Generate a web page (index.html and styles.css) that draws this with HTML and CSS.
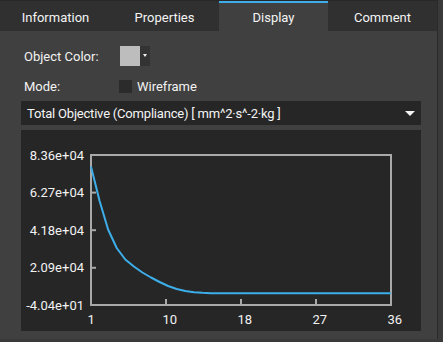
FILE: index.html
```html
<!DOCTYPE html>
<html>
<head>
<meta charset="utf-8">
<link rel="stylesheet" href="styles.css">
</head>
<body>
<div class="window">
  <div class="tabbar">
    <div class="tab">Information</div>
    <div class="tab">Properties</div>
    <div class="tab active">Display</div>
    <div class="tab">Comment</div>
  </div>
  <div class="content">
    <div class="row row-color">
      <span class="label">Object Color:</span>
      <div class="colorpick">
        <span class="swatch"></span>
        <span class="swatch-arrow"><span class="tri-small"></span></span>
      </div>
    </div>
    <div class="row row-mode">
      <span class="label">Mode:</span>
      <span class="checkbox"></span>
      <span class="check-label">Wireframe</span>
    </div>
    <div class="combo">
      <span class="combo-text">Total Objective (Compliance) [ mm^2·s^-2·kg ]</span>
      <span class="tri-big"></span>
    </div>
    <div class="chart">
      <svg width="400" height="201" viewBox="0 0 400 201" xmlns="http://www.w3.org/2000/svg">
        <g class="ylabels">
          <text x="63" y="29.5" text-anchor="end">8.36e+04</text>
          <text x="63" y="67.1" text-anchor="end">6.27e+04</text>
          <text x="63" y="104.7" text-anchor="end">4.18e+04</text>
          <text x="63" y="142.3" text-anchor="end">2.09e+04</text>
          <text x="63" y="179.9" text-anchor="end">-4.04e+01</text>
        </g>
        <g class="xlabels">
          <text x="66.5" y="194">1</text>
          <text x="141.5" y="194">10</text>
          <text x="216.5" y="194">18</text>
          <text x="291.5" y="194">27</text>
          <text x="366.5" y="194">36</text>
        </g>
        <g stroke="#a9a9a9" stroke-width="2" fill="none">
          <rect x="70" y="25" width="300" height="150"/>
          <line x1="70" y1="62.6" x2="75" y2="62.6"/>
          <line x1="70" y1="100.2" x2="75" y2="100.2"/>
          <line x1="70" y1="137.8" x2="75" y2="137.8"/>
          <line x1="145" y1="175" x2="145" y2="169"/>
          <line x1="220" y1="175" x2="220" y2="169"/>
          <line x1="295" y1="175" x2="295" y2="169"/>
        </g>
        <polyline fill="none" stroke="#3daee9" stroke-width="2" stroke-linejoin="round"
          points="70,36.5 78.6,71 87.1,99.5 95.7,118 104.3,129.5 112.9,136.5 121.4,142.5 130,147.5 138.6,152 147.1,156 155.7,159 164.3,161 172.9,162.2 181.4,162.8 190,163.2 370,163.3"/>
      </svg>
    </div>
  </div>
</div>
</body>
</html>
```
FILE: styles.css
```css
html, body {
  margin: 0;
  padding: 0;
}
body {
  background: #3a3a3a;
  width: 443px;
  height: 342px;
  overflow: hidden;
  font-family: Roboto, "Liberation Sans", sans-serif;
  font-size: 13px;
  color: #f2f2f2;
}
.window {
  width: 437px;
  height: 339px;
  background: #404040;
  border-right: 1px solid #2a2a2a;
  box-sizing: content-box;
}
.tabbar {
  display: flex;
  height: 30px;
  background: #303030;
  border-top: 1px solid #282828;
  padding-left: 1px;
}
.tab {
  width: 110px;
  height: 30px;
  box-sizing: border-box;
  border-top: 2px solid transparent;
  display: flex;
  align-items: center;
  justify-content: center;
  color: #f4f4f4;
}
.tab.active {
  background: #404040;
  border-top-color: #3daee9;
}
.content {
  padding: 15px 0 0 21px;
  display: flex;
  flex-direction: column;
}
.row {
  display: flex;
  align-items: center;
  height: 20px;
}
.row-mode {
  margin-top: 10px;
}
.label {
  width: 95px;
  padding-left: 3px;
}
.colorpick {
  display: flex;
  height: 20px;
  margin-left: 1px;
}
.swatch {
  width: 20px;
  height: 20px;
  background: #bdbdbd;
}
.swatch-arrow {
  width: 10px;
  height: 20px;
  background: #333333;
  display: flex;
  align-items: center;
  justify-content: center;
}
.tri-small {
  width: 0;
  height: 0;
  border-left: 2.5px solid transparent;
  border-right: 2.5px solid transparent;
  border-top: 3px solid #f0f0f0;
  margin-top: -1px;
}
.checkbox {
  width: 13px;
  height: 13px;
  background: #2b2b2b;
}
.check-label {
  margin-left: 5px;
}
.combo {
  margin-top: 5px;
  width: 400px;
  height: 24px;
  background: #262626;
  display: flex;
  align-items: center;
  justify-content: space-between;
  box-sizing: border-box;
  padding: 0 6px 0 6px;
}
.combo-text {
  color: #f4f4f4;
  letter-spacing: -0.2px;
}
.tri-big {
  width: 0;
  height: 0;
  border-left: 5px solid transparent;
  border-right: 5px solid transparent;
  border-top: 5px solid #f4f4f4;
}
.chart {
  margin-top: 5px;
  width: 400px;
  height: 201px;
  background: #262626;
}
.chart svg {
  display: block;
}
.chart text {
  font-family: Roboto, "Liberation Sans", sans-serif;
  font-size: 13px;
  fill: #f2f2f2;
}
```
